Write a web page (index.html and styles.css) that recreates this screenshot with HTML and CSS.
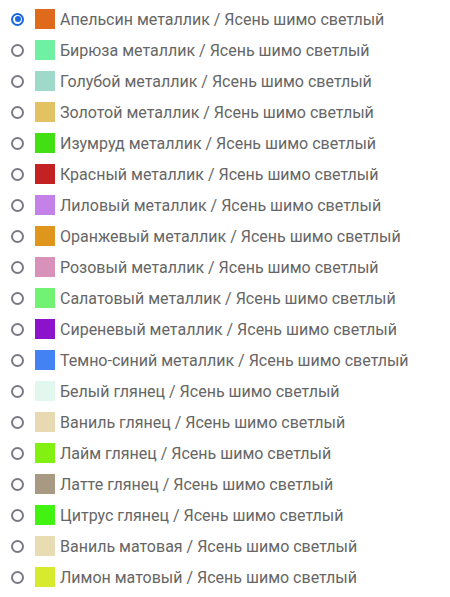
FILE: index.html
```html
<!DOCTYPE html>
<html lang="ru">
<head>
<meta charset="utf-8">
<link rel="stylesheet" href="styles.css">
</head>
<body>
<ul class="options">
  <li class="option"><span class="radio checked"></span><span class="swatch" style="background:#df6a1c"></span><span class="label">Апельсин металлик / Ясень шимо светлый</span></li>
  <li class="option"><span class="radio"></span><span class="swatch" style="background:#6ff0a2"></span><span class="label">Бирюза металлик / Ясень шимо светлый</span></li>
  <li class="option"><span class="radio"></span><span class="swatch" style="background:#9fd9c9"></span><span class="label">Голубой металлик / Ясень шимо светлый</span></li>
  <li class="option"><span class="radio"></span><span class="swatch" style="background:#e2c262"></span><span class="label">Золотой металлик / Ясень шимо светлый</span></li>
  <li class="option"><span class="radio"></span><span class="swatch" style="background:#42e012"></span><span class="label">Изумруд металлик / Ясень шимо светлый</span></li>
  <li class="option"><span class="radio"></span><span class="swatch" style="background:#c42222"></span><span class="label">Красный металлик / Ясень шимо светлый</span></li>
  <li class="option"><span class="radio"></span><span class="swatch" style="background:#c482e8"></span><span class="label">Лиловый металлик / Ясень шимо светлый</span></li>
  <li class="option"><span class="radio"></span><span class="swatch" style="background:#e0961c"></span><span class="label">Оранжевый металлик / Ясень шимо светлый</span></li>
  <li class="option"><span class="radio"></span><span class="swatch" style="background:#d892ba"></span><span class="label">Розовый металлик / Ясень шимо светлый</span></li>
  <li class="option"><span class="radio"></span><span class="swatch" style="background:#72f272"></span><span class="label">Салатовый металлик / Ясень шимо светлый</span></li>
  <li class="option"><span class="radio"></span><span class="swatch" style="background:#8c12cc"></span><span class="label">Сиреневый металлик / Ясень шимо светлый</span></li>
  <li class="option"><span class="radio"></span><span class="swatch" style="background:#4282f2"></span><span class="label">Темно-синий металлик / Ясень шимо светлый</span></li>
  <li class="option"><span class="radio"></span><span class="swatch" style="background:#e2f8ee"></span><span class="label">Белый глянец / Ясень шимо светлый</span></li>
  <li class="option"><span class="radio"></span><span class="swatch" style="background:#e8d9b2"></span><span class="label">Ваниль глянец / Ясень шимо светлый</span></li>
  <li class="option"><span class="radio"></span><span class="swatch" style="background:#82f010"></span><span class="label">Лайм глянец / Ясень шимо светлый</span></li>
  <li class="option"><span class="radio"></span><span class="swatch" style="background:#a89a82"></span><span class="label">Латте глянец / Ясень шимо светлый</span></li>
  <li class="option"><span class="radio"></span><span class="swatch" style="background:#42f210"></span><span class="label">Цитрус глянец / Ясень шимо светлый</span></li>
  <li class="option"><span class="radio"></span><span class="swatch" style="background:#e8dcb2"></span><span class="label">Ваниль матовая / Ясень шимо светлый</span></li>
  <li class="option"><span class="radio"></span><span class="swatch" style="background:#d8ea2e"></span><span class="label">Лимон матовый / Ясень шимо светлый</span></li>
</ul>
</body>
</html>
```
FILE: styles.css
```css
html, body {
  margin: 0;
  padding: 0;
  background: #ffffff;
}
body {
  font-family: Roboto, "Liberation Sans", Arial, sans-serif;
  font-size: 16px;
  color: #666666;
}
.options {
  list-style: none;
  margin: 0;
  padding: 3.5px 0 0 11px;
}
.option {
  display: flex;
  align-items: center;
  height: 31px;
}
.radio {
  box-sizing: border-box;
  width: 13px;
  height: 13px;
  border: 2px solid #7a7a86;
  border-radius: 50%;
  flex: none;
  position: relative;
}
.radio.checked {
  border-color: #1a66e0;
}
.radio.checked::after {
  content: "";
  position: absolute;
  left: 1.5px;
  top: 1.5px;
  width: 6px;
  height: 6px;
  border-radius: 50%;
  background: #1a66e0;
}
.swatch {
  width: 20px;
  height: 20px;
  margin-left: 11px;
  flex: none;
}
.label {
  margin-left: 5px;
  white-space: nowrap;
}
```
